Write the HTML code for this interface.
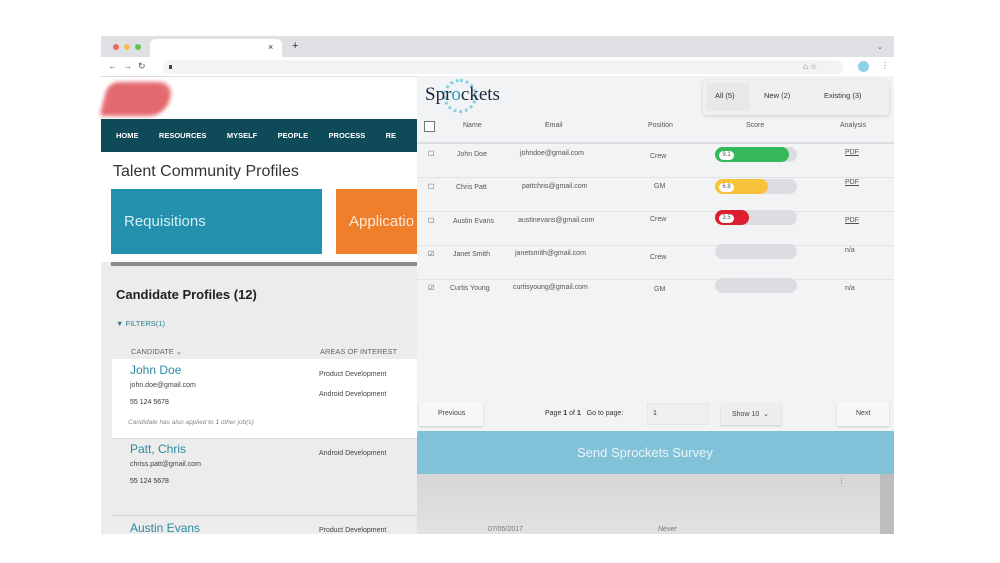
<!DOCTYPE html>
<html><head><style>
*{margin:0;padding:0;box-sizing:border-box}
body{width:1000px;height:563px;background:#fff;position:relative;overflow:hidden;font-family:"Liberation Sans",sans-serif}
.a{position:absolute}
.t{font-size:7px;color:#555}
.row{position:absolute;left:0;width:477px;border-bottom:1px solid #e2e3e6;height:34px}
.bar{position:absolute;left:298px;width:82px;height:15px;border-radius:8px;background:#dcdde0}
.fill{position:absolute;left:0;top:0;height:15px;border-radius:8px;border:2px solid}
.pill{position:absolute;left:2px;top:2px;height:9px;width:15px;border-radius:5px;background:#fff;font-size:6px;color:#555;text-align:center;line-height:9px}
</style></head><body>
<!-- browser chrome -->
<div class="a" style="left:101px;top:36px;width:793px;height:21px;background:#dfe0e3"></div>
<div class="a" style="left:113px;top:44px;width:6px;height:6px;border-radius:3px;background:#ed6a5e"></div>
<div class="a" style="left:124px;top:44px;width:6px;height:6px;border-radius:3px;background:#f5bf4f"></div>
<div class="a" style="left:135px;top:44px;width:6px;height:6px;border-radius:3px;background:#61c554"></div>
<div class="a" style="left:150px;top:39px;width:132px;height:18px;background:#fff;border-radius:5px 5px 0 0"></div>
<div class="a" style="left:268px;top:42px;font-size:9px;color:#333">×</div>
<div class="a" style="left:292px;top:40px;font-size:11px;color:#333">+</div>
<div class="a" style="left:877px;top:43px;font-size:7px;color:#555">⌄</div>
<div class="a" style="left:101px;top:57px;width:793px;height:20px;background:#fff;border-bottom:1px solid #ddd"></div>
<div class="a" style="left:108px;top:61px;font-size:9px;color:#555;letter-spacing:6px">←→↻</div>
<div class="a" style="left:163px;top:60px;width:680px;height:14px;border-radius:7px;background:#f1f3f4"></div>
<div class="a" style="left:169px;top:65px;width:3px;height:4px;background:#444"></div>
<div class="a" style="left:803px;top:62px;font-size:8px;color:#777">⌂ ☆</div>
<div class="a" style="left:858px;top:61px;width:11px;height:11px;border-radius:6px;background:#8fd0e4"></div>
<div class="a" style="left:881px;top:61px;font-size:8px;color:#666">⋮</div>
<!-- ADP site -->
<div class="a" style="left:101px;top:77px;width:316px;height:457px;background:#ececec"></div>
<div class="a" style="left:101px;top:77px;width:316px;height:42px;background:#fff"></div>
<div class="a" style="left:104px;top:82px;width:66px;height:34px;background:#e46a6f;border-radius:10px 16px 16px 4px;transform:skewX(-15deg);filter:blur(2px)"></div>
<div class="a" style="left:101px;top:119px;width:316px;height:33px;background:#0e4a58"></div>
<div class="a" style="left:116px;top:131px;font-size:7.5px;color:#fff;font-weight:bold;word-spacing:2px;white-space:nowrap">HOME &nbsp;&nbsp;&nbsp; RESOURCES &nbsp;&nbsp;&nbsp; MYSELF &nbsp;&nbsp;&nbsp; PEOPLE &nbsp;&nbsp;&nbsp; PROCESS &nbsp;&nbsp;&nbsp; RE</div>
<div class="a" style="left:101px;top:152px;width:316px;height:110px;background:#fff"></div>
<div class="a" style="left:113px;top:163px;font-size:16px;color:#333">Talent Community Profiles</div>
<div class="a" style="left:111px;top:189px;width:211px;height:65px;background:#2391ad"></div>
<div class="a" style="left:124px;top:213px;font-size:15px;color:#d7eef5">Requisitions</div>
<div class="a" style="left:336px;top:189px;width:81px;height:65px;background:#f07f2b;overflow:hidden"><div style="margin:24px 0 0 13px;font-size:15px;color:#fde8d8;white-space:nowrap">Applicatio</div></div>
<div class="a" style="left:111px;top:262px;width:306px;height:4px;background:#8c8c8c"></div>
<div class="a" style="left:116px;top:287px;font-size:13px;font-weight:bold;color:#222">Candidate Profiles (12)</div>
<div class="a" style="left:116px;top:319px;font-size:7.5px;color:#2a7f95">▼ FILTERS(1)</div>
<div class="a" style="left:131px;top:347px;font-size:7.5px;color:#666">CANDIDATE <span style="color:#2a7f95">⌄</span></div>
<div class="a" style="left:320px;top:347px;font-size:7.5px;color:#666">AREAS OF INTEREST</div>
<div class="a" style="left:112px;top:359px;width:305px;height:80px;background:#fff;border-bottom:1px solid #ddd"></div>
<div class="a" style="left:130px;top:363px;font-size:12px;color:#2a8aa3">John Doe</div>
<div class="a" style="left:130px;top:382px;font-size:7px;color:#444">john.doe@gmail.com</div>
<div class="a" style="left:130px;top:399px;font-size:7px;color:#333">55 124 5678</div>
<div class="a" style="left:128px;top:419px;font-size:6.5px;color:#888;font-style:italic">Candidate has also applied to <span style="color:#2a8aa3">1</span> other job(s)</div>
<div class="a" style="left:319px;top:371px;font-size:7px;color:#444">Product Development</div>
<div class="a" style="left:319px;top:391px;font-size:7px;color:#444">Android Development</div>
<div class="a" style="left:130px;top:442px;font-size:12px;color:#2a8aa3">Patt, Chris</div>
<div class="a" style="left:130px;top:461px;font-size:7px;color:#444">chriss.patt@gmail.com</div>
<div class="a" style="left:130px;top:478px;font-size:7px;color:#333">55 124 5678</div>
<div class="a" style="left:319px;top:450px;font-size:7px;color:#444">Android Development</div>
<div class="a" style="left:112px;top:515px;width:782px;height:1px;background:#d0d0d0"></div>
<div class="a" style="left:130px;top:521px;font-size:12px;color:#2a8aa3">Austin Evans</div>
<div class="a" style="left:319px;top:527px;font-size:7px;color:#444">Product Development</div>
<!-- gray area right bottom -->
<div class="a" style="left:417px;top:474px;width:477px;height:60px;background:linear-gradient(#d6d6d6,#e2e2e2)"></div>
<div class="a" style="left:880px;top:474px;width:14px;height:60px;background:#bdbdbd"></div>
<div class="a" style="left:838px;top:477px;font-size:7px;color:#777">⋮</div>
<div class="a" style="left:488px;top:526px;font-size:7px;color:#777">07/05/2017</div>
<div class="a" style="left:658px;top:526px;font-size:7px;color:#777;font-style:italic">Never</div>
<!-- Sprockets panel -->
<div class="a" style="left:417px;top:76px;width:477px;height:355px;background:#f2f3f5">
 <div class="a" style="left:26px;top:3px;width:34px;height:34px;border-radius:17px;border:3px dotted #8bcfe0"></div>
 <div class="a" style="left:8px;top:8px;font-family:'Liberation Serif',serif;font-size:19px;color:#1a2a3a">Spr<span style="color:#2a9ec0">o</span>ckets</div>
 <div class="a" style="left:286px;top:4px;width:186px;height:35px;background:#eef0f2;border-radius:3px;box-shadow:0 1px 3px #ccc"></div>
 <div class="a" style="left:289px;top:7px;width:44px;height:28px;background:#e6e8ea"></div>
 <div class="a t" style="left:298px;top:15px;font-size:7.5px;color:#333">All (5)</div>
 <div class="a t" style="left:347px;top:15px;font-size:7.5px;color:#333">New (2)</div>
 <div class="a t" style="left:407px;top:15px;font-size:7.5px;color:#333">Existing (3)</div>
 <div class="a" style="left:0;top:40px;width:477px;height:28px;border-bottom:2px solid #dcdde0"></div>
 <div class="a" style="left:7px;top:45px;width:11px;height:11px;border:1px solid #777;background:#fff"></div>
 <div class="a t" style="left:46px;top:46px">Name</div>
 <div class="a t" style="left:128px;top:46px">Email</div>
 <div class="a t" style="left:231px;top:46px">Position</div>
 <div class="a t" style="left:329px;top:46px">Score</div>
 <div class="a t" style="left:423px;top:46px">Analysis</div>
 <div class="row" style="top:68px"></div>
 <div class="row" style="top:102px"></div>
 <div class="row" style="top:136px"></div>
 <div class="row" style="top:170px"></div>
 <div class="a t" style="left:11px;top:74px">☐</div><div class="a t" style="left:40px;top:75px">John Doe</div><div class="a t" style="left:103px;top:74px">johndoe@gmail.com</div><div class="a t" style="left:233px;top:77px">Crew</div>
 <div class="bar" style="top:71px"><div class="fill" style="width:74px;background:#35b85a;border-color:#35b85a"><div class="pill">9.1</div></div></div>
 <div class="a t" style="left:428px;top:73px;text-decoration:underline">PDF</div>
 <div class="a t" style="left:11px;top:107px">☐</div><div class="a t" style="left:39px;top:108px">Chris Patt</div><div class="a t" style="left:105px;top:107px">pattchris@gmail.com</div><div class="a t" style="left:237px;top:107px">GM</div>
 <div class="bar" style="top:103px"><div class="fill" style="width:53px;background:#f6c33a;border-color:#f6c33a"><div class="pill">6.8</div></div></div>
 <div class="a t" style="left:428px;top:103px;text-decoration:underline">PDF</div>
 <div class="a t" style="left:11px;top:141px">☐</div><div class="a t" style="left:36px;top:142px">Austin Evans</div><div class="a t" style="left:101px;top:141px">austinevans@gmail.com</div><div class="a t" style="left:233px;top:140px">Crew</div>
 <div class="bar" style="top:134px"><div class="fill" style="width:34px;background:#dc1f30;border-color:#dc1f30"><div class="pill">3.5</div></div></div>
 <div class="a t" style="left:428px;top:141px;text-decoration:underline">PDF</div>
 <div class="a t" style="left:11px;top:174px">☑</div><div class="a t" style="left:36px;top:175px">Janet Smith</div><div class="a t" style="left:98px;top:174px">janetsmith@gmail.com</div><div class="a t" style="left:233px;top:178px">Crew</div>
 <div class="bar" style="top:168px"></div>
 <div class="a t" style="left:428px;top:171px">n/a</div>
 <div class="a t" style="left:11px;top:208px">☑</div><div class="a t" style="left:33px;top:209px">Curtis Young</div><div class="a t" style="left:96px;top:208px">curtisyoung@gmail.com</div><div class="a t" style="left:237px;top:210px">GM</div>
 <div class="bar" style="top:202px"></div>
 <div class="a t" style="left:428px;top:209px">n/a</div>
 <div class="a" style="left:2px;top:326px;width:64px;height:24px;background:#f6f7f8;box-shadow:0 1px 2px #ccc"></div>
 <div class="a t" style="left:21px;top:334px;color:#444">Previous</div>
 <div class="a t" style="left:128px;top:334px;color:#333">Page <b>1</b> of <b>1</b> &nbsp; Go to page:</div>
 <div class="a" style="left:230px;top:327px;width:62px;height:22px;background:#eef0f2;border:1px solid #e4e6e8"></div>
 <div class="a t" style="left:236px;top:334px;color:#333">1</div>
 <div class="a" style="left:304px;top:327px;width:60px;height:22px;background:#eceef0;box-shadow:0 1px 2px #ccc"></div>
 <div class="a t" style="left:315px;top:334px;color:#444">Show 10 &nbsp;⌄</div>
 <div class="a" style="left:420px;top:326px;width:52px;height:24px;background:#f6f7f8;box-shadow:0 1px 2px #ccc"></div>
 <div class="a t" style="left:439px;top:334px;color:#444">Next</div>
</div>
<div class="a" style="left:417px;top:431px;width:477px;height:43px;background:#82c2d8"></div>
<div class="a" style="left:577px;top:445px;font-size:13px;color:#eaf6fa">Send Sprockets Survey</div>
</body></html>
